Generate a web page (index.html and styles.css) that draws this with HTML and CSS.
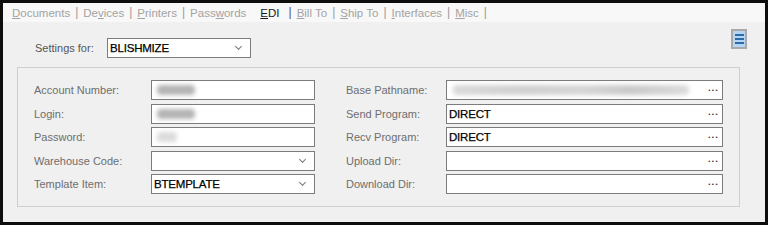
FILE: index.html
```html
<!DOCTYPE html>
<html>
<head>
<meta charset="utf-8">
<link rel="stylesheet" href="styles.css">
</head>
<body>
<div class="window">
  <div class="tabs">
    <span class="tab"><u>D</u>ocuments</span><span class="sep">|</span>
    <span class="tab">De<u>v</u>ices</span><span class="sep">|</span>
    <span class="tab"><u>P</u>rinters</span><span class="sep">|</span>
    <span class="tab">Pass<u>w</u>ords</span>
    <span class="tab active"><u>E</u>DI</span><span class="sep dark">|</span>
    <span class="tab"><u>B</u>ill To</span><span class="sep">|</span>
    <span class="tab"><u>S</u>hip To</span><span class="sep">|</span>
    <span class="tab"><u>I</u>nterfaces</span><span class="sep">|</span>
    <span class="tab"><u>M</u>isc</span><span class="sep">|</span>
  </div>
  <div class="main">
    <div class="top-row">
      <span class="settings-label">Settings for:</span>
      <div class="field select settings-select"><span class="val">BLISHMIZE</span><span class="chev"></span></div>
      <div class="menu-btn"><span></span><span></span><span></span></div>
    </div>
    <div class="group">
      <div class="col left">
        <div class="row"><span class="lbl">Account Number:</span><div class="field"><span class="blob b1"></span></div></div>
        <div class="row"><span class="lbl">Login:</span><div class="field"><span class="blob b1"></span></div></div>
        <div class="row"><span class="lbl">Password:</span><div class="field"><span class="blob b2"></span></div></div>
        <div class="row"><span class="lbl">Warehouse Code:</span><div class="field select"><span class="val"></span><span class="chev"></span></div></div>
        <div class="row"><span class="lbl">Template Item:</span><div class="field select"><span class="val">BTEMPLATE</span><span class="chev"></span></div></div>
      </div>
      <div class="col right">
        <div class="row"><span class="lbl">Base Pathname:</span><div class="field wide"><span class="blob b3"></span><span class="dots">•••</span></div></div>
        <div class="row"><span class="lbl">Send Program:</span><div class="field wide"><span class="val">DIRECT</span><span class="dots">•••</span></div></div>
        <div class="row"><span class="lbl">Recv Program:</span><div class="field wide"><span class="val">DIRECT</span><span class="dots">•••</span></div></div>
        <div class="row"><span class="lbl">Upload Dir:</span><div class="field wide"><span class="val"></span><span class="dots">•••</span></div></div>
        <div class="row"><span class="lbl">Download Dir:</span><div class="field wide"><span class="val"></span><span class="dots">•••</span></div></div>
      </div>
    </div>
  </div>
</div>
</body>
</html>
```

FILE: styles.css
```css
* { box-sizing: border-box; }
html, body { margin: 0; padding: 0; }
body {
  width: 768px;
  height: 225px;
  background: #0d0d0d;
  font-family: "Liberation Sans", Arial, sans-serif;
  overflow: hidden;
}
.window {
  margin: 3px;
  width: 762px;
  height: 219px;
  background: #f0f0f0;
  display: flex;
  flex-direction: column;
}
.tabs {
  height: 19px;
  background: #f8f8f8;
  display: flex;
  align-items: center;
  padding-left: 9px;
  font-size: 11.5px;
  color: #a3a3a3;
  white-space: nowrap;
}
.tab u { text-decoration: underline; }
.tab.active { color: #1a1a1a; margin-left: 14px; }
.sep { margin: 0 5px 0 5px; color: #9a9a9a; font-size: 12px; position: relative; top: -1px; }
.sep.dark { color: #555; margin-left: 9px; }
.main {
  flex: 1;
  padding: 16px 18px 0 14px;
}
.top-row {
  display: flex;
  align-items: flex-start;
  height: 29px;
}
.settings-label {
  font-size: 11px;
  color: #555;
  margin-left: 18px;
  margin-top: 4px;
  width: 72px;
}
.menu-btn {
  margin-left: auto;
  margin-top: -9px;
  width: 16px;
  height: 20px;
  background: #b5d6f3;
  border: 2px solid #a9a9a9;
  display: flex;
  flex-direction: column;
  justify-content: center;
  align-items: center;
  gap: 2px;
}
.menu-btn span {
  display: block;
  width: 9px;
  height: 2px;
  background: #2f6aa8;
}
.group {
  width: 723px;
  height: 140px;
  border: 1px solid #cfcfcf;
  display: flex;
  padding: 12px 0 0 16px;
}
.col { display: flex; flex-direction: column; gap: 3.5px; }
.col.left { width: 312px; }
.row {
  display: flex;
  align-items: center;
  height: 20px;
}
.lbl {
  font-size: 11px;
  color: #6e6e6e;
}
.left .lbl { width: 117px; }
.right .lbl { width: 100px; }
.field {
  height: 20px;
  width: 164px;
  background: #fff;
  border: 1px solid #7c7c7c;
  display: flex;
  align-items: center;
  padding-left: 2px;
  font-size: 11.5px;
  color: #000;
  overflow: hidden;
}
.field.settings-select { width: 144px; }
.field.wide { width: 277px; }
.val { flex: 1; white-space: nowrap; letter-spacing: -0.2px; -webkit-text-stroke: 0.25px #000; }
.chev {
  width: 5px;
  height: 5px;
  border-right: 1px solid #777;
  border-bottom: 1px solid #777;
  transform: rotate(45deg);
  margin-right: 9px;
  margin-top: -3px;
}
.dots {
  margin-left: auto;
  font-size: 6px;
  letter-spacing: 1.5px;
  color: #333;
  margin-right: 3px;
}
.blob {
  display: block;
  height: 10px;
  margin-left: 3px;
  border-radius: 4px;
  filter: blur(2px);
}
.b1 { width: 38px; background: #b4b4b4; }
.b2 { width: 20px; background: #dcdcdc; }
.b3 {
  width: 236px;
  margin-left: 4px;
  background: linear-gradient(90deg, #dadada 0%, #d0d0d0 30%, #d6d6d6 55%, #c9c9c9 75%, #dcdcdc 100%);
}
```
